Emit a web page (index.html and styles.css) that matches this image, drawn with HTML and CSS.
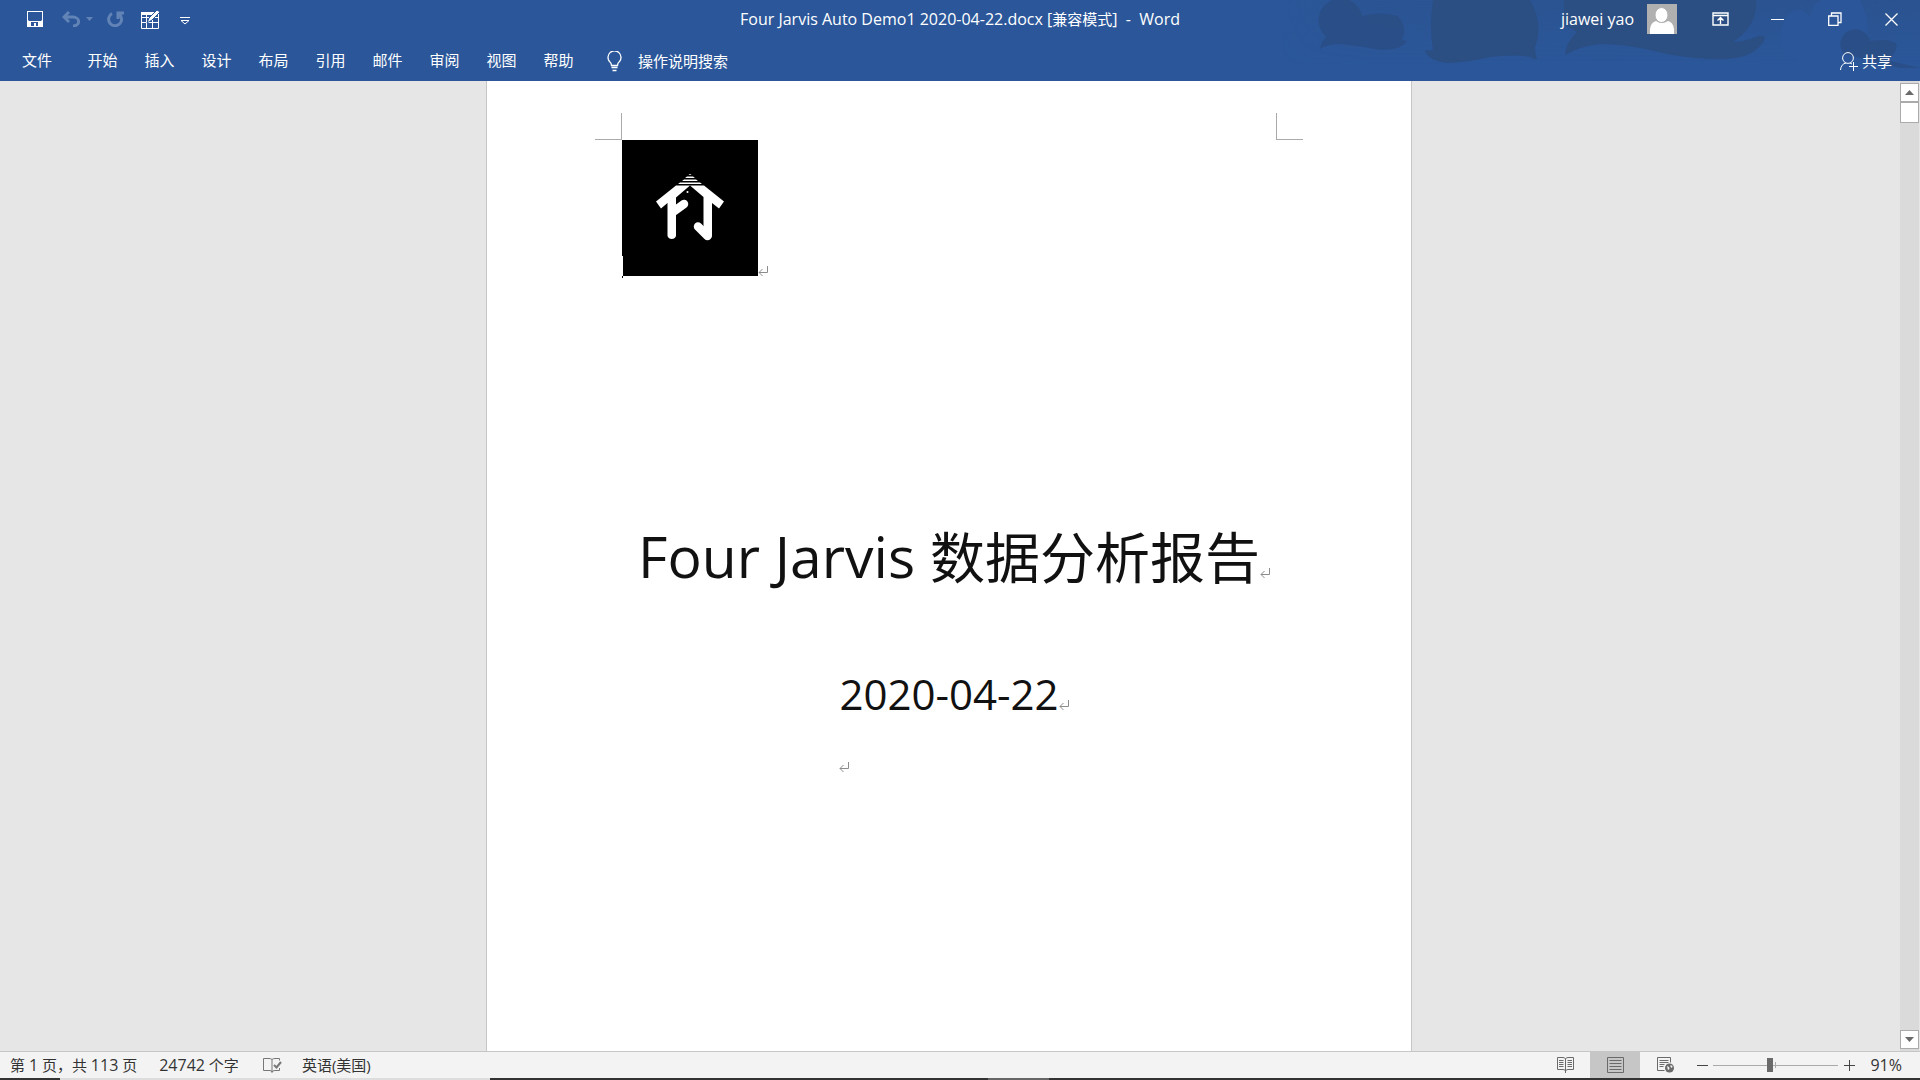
FILE: index.html
```html
<!DOCTYPE html>
<html lang="zh-CN">
<head>
<meta charset="utf-8">
<title>Four Jarvis Auto Demo1 2020-04-22.docx - Word</title>
<link rel="stylesheet" href="styles.css">
</head>
<body>
<svg class="sprite" aria-hidden="true">
  <symbol id="return" viewBox="0 0 10 10"><path d="M9.500 0v6.500H1M4.500 3L1 6.500 4.500 10" fill="none" stroke="currentColor"/></symbol>
</svg>
<div class="app">
  <header class="header">
    <svg class="art" viewBox="0 0 640 81" aria-hidden="true">
      <defs>
        <linearGradient id="fade" x1="0" x2="1" y1="0" y2="0"><stop offset="0" stop-color="#2b4e83" stop-opacity="0"/><stop offset=".15" stop-color="#2b4e83" stop-opacity=".3"/><stop offset="1" stop-color="#2b4e83" stop-opacity=".45"/></linearGradient>
        <linearGradient id="down" x1="0" x2="0" y1="0" y2="1"><stop offset="0" stop-color="#fff"/><stop offset=".8" stop-color="#000"/></linearGradient>
        <mask id="soft"><rect width="640" height="81" fill="url(#down)"/></mask>
      </defs>
      <rect width="640" height="81" fill="url(#fade)" mask="url(#soft)"/>
      <path d="M500 48Q500 12 518 10Q526 10 530 18Q532 4 541 0H580Q596 30 578 60Q530 76 500 48Z" fill="#2b579a"/>
      <g fill="#2b4e83">
        <path opacity=".75" d="M40 49Q41 41 46 37A22 22 0 1 1 82 16Q100 11 118 16Q128 28 122 40L127 41Q122 50 100 50Q80 46 60 44Q48 44 40 49Z"/>
        <path d="M153 0Q149 25 153 50Q149 51 145 50Q148 61 168 63Q190 62 210 57Q235 54 250 57L257 60Q255 54 255 47Q264 25 250 0Z"/>
        <path d="M284 0V24L297 32Q286 42 285 55Q300 46 320 44Q345 44 370 50Q400 58 430 59Q455 60 467 55Q482 48 485 38Q484 35 478 36Q465 42 453 42Q478 25 476 0Z"/>
        <path opacity=".8" d="M564 54A15 15 0 1 1 590 41Q610 38 617 44Q616 56 606 60Q624 64 640 68H620Q590 60 564 54Z"/>
      </g>
    </svg>
    <div class="titlebar">
      <div class="quick">
        <button class="tool save" aria-label="保存"><svg width="16" height="16" viewBox="0 0 16 16"><path fill="#fff" fill-rule="evenodd" d="M0 0h16v16H0zM1 1v8l1 1h12l1-1V1zM4 11v4h3v-3h2v3h2v-4z"/></svg></button>
        <button class="tool undo" aria-label="撤消"><svg width="18" height="16" viewBox="0 0 18 16"><path d="M7 1L2 6l5 5M2 6h9a5 4 0 0 1 0 9" fill="none" stroke="#6283b6" stroke-width="3"/></svg></button>
        <button class="tool caret" aria-label="撤消选项"><svg width="7" height="4" viewBox="0 0 7 4"><path d="M0 0h7L3.500 4z" fill="#6283b6"/></svg></button>
        <button class="tool redo" aria-label="重复"><svg width="17" height="16" viewBox="0 0 17 16"><path d="M5 2.500A6.500 6.500 0 1 0 12 3M11 8V2h6" fill="none" stroke="#6283b6" stroke-width="3"/></svg></button>
        <button class="tool table" aria-label="绘制表格"><svg width="19" height="20" viewBox="0 0 19 20"><path d="M.5 3.500h17v16H.5zM.5 8.500h17M.5 13.500h17M5.500 4v15M11.500 4v15" fill="none" stroke="#fff"/><path d="M0 3h14v3H0z" fill="#fff"/><path d="M6 14l2-5 8-8 3 2-8 8z" fill="#fff" stroke="#2b579a"/></svg></button>
        <button class="tool custom" aria-label="自定义快速访问工具栏"><svg width="10" height="8" viewBox="0 0 10 8"><path d="M0 .5h10M1 3.500h8L5 7z" fill="none" stroke="#fff"/></svg></button>
      </div>
      <h1 class="caption">Four Jarvis Auto Demo1 2020-04-22.docx [<span class="mode">兼容模式</span>]&nbsp; -&nbsp; Word</h1>
      <div class="window">
        <span class="user">jiawei yao</span>
        <svg class="avatar" width="30" height="30" viewBox="0 0 30 30"><path fill="#b1b0b0" d="M0 0h30v30H0z"/><path fill="#fff" d="M3 30V25Q4 18 9 17Q15 21 21 17Q26 18 27 25V30z"/><ellipse cx="14.500" cy="11" rx="6.500" ry="7.500" fill="#fff" stroke="#b1b0b0"/></svg>
        <button class="win" aria-label="功能区显示选项"><svg width="17" height="14" viewBox="0 0 17 14"><path d="M1 1h15v12H1zM1 3.500h15M8.500 12V6M5.500 8.500l3-3 3 3" fill="none" stroke="#fff" stroke-width="1.400"/></svg></button>
        <button class="win" aria-label="最小化"><svg width="13" height="14" viewBox="0 0 13 14"><path d="M0 7.500h13" stroke="#fff"/></svg></button>
        <button class="win" aria-label="还原"><svg width="14" height="14" viewBox="0 0 14 14"><path d="M.7 4h9.300v9.300H.7zM3.500 4V1H13v9.500h-3" fill="none" stroke="#fff" stroke-width="1.300"/></svg></button>
        <button class="win" aria-label="关闭"><svg width="13" height="13" viewBox="0 0 13 13"><path d="M.5.5l12 12M12.500.5l-12 12" stroke="#fff" stroke-width="1.300"/></svg></button>
      </div>
    </div>
    <nav class="tabs">
      <button class="tab file">文件</button>
      <button class="tab">开始</button>
      <button class="tab">插入</button>
      <button class="tab">设计</button>
      <button class="tab">布局</button>
      <button class="tab">引用</button>
      <button class="tab">邮件</button>
      <button class="tab">审阅</button>
      <button class="tab">视图</button>
      <button class="tab">帮助</button>
      <button class="tell"><svg width="15" height="21" viewBox="0 0 15 21"><path d="M4.500 14.500Q4.500 12 2.500 10.500A6.500 6.500 0 1 1 12.500 10.500Q10.500 12 10.500 14.500zM4.500 16.500h6M5.500 19.500h4" fill="none" stroke="#fff" stroke-width="1.300"/></svg>操作说明搜索</button>
      <button class="share"><svg width="18" height="19" viewBox="0 0 18 19"><circle cx="8" cy="6" r="5.400" fill="none" stroke="#fff"/><path d="M.5 18Q1 12 6 11M10 11l2 1M13.500 10v9M9 14.500h9" fill="none" stroke="#fff"/></svg>共享</button>
    </nav>
  </header>

  <main class="workspace">
    <div class="canvas">
      <article class="page">
        <div class="crop-marks"><span class="crop left"></span><span class="crop right"></span></div>
        <p class="logo-line">
          <svg class="logo" width="136" height="136" viewBox="0 0 136 136" role="img" aria-label="Four Jarvis">
            <path d="M0 0h136v136H0z"/>
            <g fill="#fff">
              <path d="M66.500 35L68 34l1.500 1zM63 38l2-1.500h6l2 1.500zM60 41l2-1.500h12l2 1.500zM56 44l2-1.500h20l2 1.500z"/>
              <path d="M54 45.500H68L54 57.500V96A4.500 4.500 0 0 1 45.500 96V63L39 68.500 34 61.500Z"/>
              <path d="M68 45.500H82L102 61.500 97 68.500 90 63V96A4.500 4.500 0 0 1 81.500 96V57Z"/>
              <circle cx="65.500" cy="52" r="1"/>
            </g>
            <path d="M51 72L62 64M85.500 96L76 86.500" stroke="#fff" stroke-width="8.500" stroke-linecap="round"/>
          </svg><svg class="mark"><use href="#return"/></svg>
          <span class="cursor"></span>
        </p>
        <h2 class="title">Four Jarvis <span class="han">数据分析报告</span><svg class="mark"><use href="#return"/></svg></h2>
        <div class="date-block">
          <p class="date">2020-04-22<svg class="mark"><use href="#return"/></svg></p>
          <p class="empty"><svg class="mark"><use href="#return"/></svg></p>
        </div>
      </article>
    </div>
    <div class="scrollbar">
      <button class="arrow" aria-label="向上滚动"><svg width="9" height="5" viewBox="0 0 9 5"><path d="M0 5h9L4.500 0z" fill="#6a6a6a"/></svg></button>
      <div class="thumb"></div>
      <button class="arrow down" aria-label="向下滚动"><svg width="9" height="5" viewBox="0 0 9 5"><path d="M0 0h9L4.500 5z" fill="#6a6a6a"/></svg></button>
    </div>
  </main>

  <footer class="status">
    <span class="pages">第 <span class="num">1</span> 页，共 <span class="num">113</span> 页</span>
    <span class="words"><span class="num">24742</span> 个字</span>
    <svg class="proof" width="19" height="16" viewBox="0 0 19 16"><path d="M9 2.500Q8 1.500 6 1.500H.5v12H7Q9 13.500 9 15.500Q9 13.500 12 13.500h4.500V11M9 2.500V15M9 2.500Q10 1.500 12 1.500h4.500v2" fill="none" stroke="#777"/><path d="M11 8l2.500 2.500L18 5" fill="none" stroke="#777" stroke-width="2"/></svg>
    <span class="language">英语(美国)</span>
    <div class="views">
      <button class="view" aria-label="阅读视图"><svg width="17" height="16" viewBox="0 0 17 16"><path d="M8.500 2Q8 .5 6 .5H.5v12H6q2 0 2.500 1.500Q9 12.500 11 12.500h5.500V.5H11Q9 .5 8.500 2zv14M2 3.500h4.500M2 5.500h4.500M2 7.500h4.500M2 9.500h4.500M10.500 3.500H15M10.500 5.500H15M10.500 7.500H15M10.500 9.500H15" fill="none" stroke="#6a6a6a"/></svg></button>
      <button class="view active" aria-label="页面视图"><svg width="17" height="16" viewBox="0 0 17 16"><path d="M.5.5h16v15H.5zM2.500 3.500h12M2.500 6.500h12M2.500 9.500h12M2.500 12.500h12" fill="none" stroke="#6a6a6a"/></svg></button>
      <button class="view" aria-label="Web 版式视图"><svg width="17" height="16" viewBox="0 0 17 16"><path d="M7.500 13.500H.5V.5h13v5M2.500 3.500h9M2.500 5.500h9M2.500 7.500h5M2.500 9.500h4" fill="none" stroke="#6a6a6a"/><circle cx="12.500" cy="11" r="4.500" fill="#6a6a6a"/><path d="M10 9l2 1 .5 2-1.500 1zM13.500 8l2 1-.5 2-1.500-1z" fill="#f3f3f3"/></svg></button>
    </div>
    <button class="step" aria-label="缩小"><svg width="11" height="11" viewBox="0 0 11 11"><path d="M0 5.500h11" stroke="#444"/></svg></button>
    <input class="zoom" type="range" min="10" max="190" value="91" aria-label="显示比例">
    <button class="step" aria-label="放大"><svg width="11" height="11" viewBox="0 0 11 11"><path d="M0 5.500h11M5.500 0v11" stroke="#444"/></svg></button>
    <button class="percent">91%</button>
  </footer>
  <div class="taskbar"><span class="task-idle"></span><span class="task-light"></span><span class="task-gap"></span><span class="task-active"></span></div>
</div>
</body>
</html>
```
FILE: styles.css
```css
* { box-sizing: border-box; }
body, h1, h2, p { margin: 0; font-weight: 400; }
body { font-family: "Open Sans", "Noto Sans CJK SC", sans-serif; font-size: 15px; line-height: 20px; }
button { display: flex; align-items: center; justify-content: center; padding: 0; border: 0; background: none; color: inherit; font: inherit; white-space: nowrap; }
svg { display: block; flex: none; }
.sprite { position: absolute; width: 0; height: 0; }
.app { display: flex; flex-direction: column; height: 100vh; overflow: hidden; }

.header { position: relative; flex: none; background: #2b579a; color: #fff; }
.art { position: absolute; top: 0; right: 0; width: 640px; height: 100%; }
.titlebar { position: relative; display: grid; grid-template-columns: 1fr auto 1fr; align-items: center; height: 38px; }
.quick { display: flex; align-items: center; padding-left: 27px; }
.undo { margin-left: 19px; }
.caret { margin-left: 6px; }
.redo { margin-left: 14px; }
.table { margin-left: 17px; }
.custom { margin: 4px 0 0 20px; }
.caption, .user { font-size: 16px; line-height: 20px; }
.mode { font-size: 15px; }
.window { display: flex; align-items: center; justify-content: flex-end; }
.avatar { margin: 0 15px 0 13px; }
.win { width: 57px; height: 38px; }
.tabs { position: relative; display: flex; align-items: center; height: 43px; }
.tab { width: 57px; height: 40px; }
.file { width: 74px; }
.tell, .share { padding-top: 3px; }
.tell { gap: 16px; margin-left: 20px; }
.share { gap: 4px; margin: 0 28px 0 auto; }

.workspace { display: flex; flex: 1; min-height: 0; background: #e6e6e6; }
.canvas { display: flex; flex: 1; justify-content: center; overflow: hidden; }
.page { width: 926px; height: 1310px; padding: 32px 134px 0; border: solid #c6c6c6; border-width: 0 1px; background: #fff; color: #111; }
.crop-marks { display: flex; justify-content: space-between; margin: 0 -26px; }
.crop { width: 27px; height: 27px; border-bottom: 1px solid #aaa; }
.left { border-right: 1px solid #aaa; }
.right { border-left: 1px solid #aaa; }
.logo-line { position: relative; display: flex; align-items: flex-end; height: 136px; padding-left: 1px; }
.cursor { position: absolute; left: 1px; top: 116px; width: 1px; height: 22px; background: linear-gradient(#fff 20px, #000 20px); }
.mark { display: inline-block; width: 10px; height: 10px; margin-right: -10px; color: #8c8c8c; vertical-align: baseline; }
.title { margin-top: 240px; font-size: 57px; line-height: 80px; text-align: center; white-space: nowrap; }
.han { font-size: 55px; }
.date-block { width: max-content; margin: 67px auto 0; }
.date { font-size: 42px; line-height: 60px; }
.empty { margin-top: 32px; }
.scrollbar { display: flex; flex-direction: column; width: 19px; margin: 0 1px 0 2px; padding: 2px 0; background: #dadada; }
.arrow { height: 19px; border: 1px solid #ababab; background: #fff; }
.thumb { height: 21px; border: 1px solid #ababab; background: #fff; }
.down { margin-top: auto; }

.status { display: flex; flex: none; align-items: center; height: 27px; padding: 0 18px 0 10px; border-top: 1px solid #c6c6c6; background: #f3f3f3; color: #333; }
.num, .percent { font-size: 16px; }
.words { margin-left: 22px; }
.proof { margin-left: 24px; }
.language { margin-left: 20px; }
.views { display: flex; align-self: stretch; margin: 0 5px 0 auto; }
.view { width: 50px; }
.active { background: #c6c6c6; }
.step { width: 14px; }
.zoom { width: 125px; height: 16px; margin: 0 4px; appearance: none; background: linear-gradient(#aaa, #aaa) center / 1px 6px no-repeat, linear-gradient(#aaa, #aaa) center / 100% 1px no-repeat; }
.zoom::-webkit-slider-thumb { appearance: none; width: 6px; height: 14px; background: #6a6a6a; }
.percent { margin-left: 14px; }
.taskbar { display: flex; flex: none; height: 2px; background: #333; }
.task-idle { width: 60px; }
.task-light { width: 430px; background: #ddd; }
.task-gap { width: 498px; }
.task-active { width: 61px; background: #666; }
```
